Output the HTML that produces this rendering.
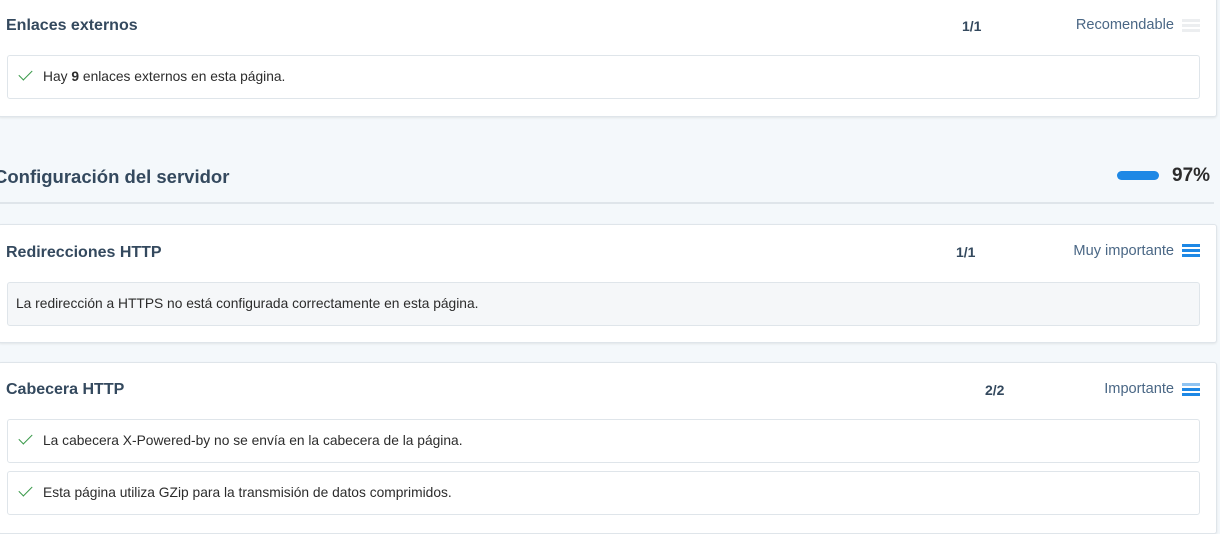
<!DOCTYPE html>
<html><head><style>
body{margin:0;width:1220px;height:523px;overflow:hidden;background:#f4f8fb;font-family:"Liberation Sans",Arial,sans-serif;position:relative}
.card{position:absolute;left:-2px;width:1217px;background:#fff;border:1px solid #dfe5ea;border-radius:3px;box-shadow:0 1px 2px rgba(0,0,0,.08)}
.h{position:absolute;left:7px;font-size:16px;font-weight:bold;color:#34495e}
.sc{position:absolute;font-size:14px;font-weight:bold;color:#34495e}
.lab{position:absolute;right:42px;font-size:14.6px;color:#4a6785}
.ic{position:absolute;right:16px;width:18px}
.ic i{display:block;height:3px;margin-bottom:2px;background:#1e88e5}
.box{position:absolute;left:8px;width:1191px;height:42px;border:1px solid #dfe5ea;border-radius:3px;background:#fff;font-size:13.8px;color:#2c2c2c;line-height:42px}
.box .t{position:absolute;left:35px}
.chk{position:absolute;left:11px;top:14px;width:12px;height:6px;border-left:1.5px solid #3a9a4a;border-bottom:1.5px solid #3a9a4a;transform:rotate(-45deg)}
</style></head><body>
<div class="card" style="top:-5px;height:120px">
 <div class="h" style="top:21px">Enlaces externos</div>
 <div class="sc" style="left:963px;top:22px">1/1</div>
 <div class="lab" style="top:21px">Recomendable</div>
 <div class="ic" style="top:23px"><i style="background:#eceef0"></i><i style="background:#eceef0"></i><i style="background:#eceef0"></i></div>
 <div class="box" style="top:59px"><span class="chk"></span><span class="t">Hay <b>9</b> enlaces externos en esta página.</span></div>
</div>
<div style="position:absolute;left:-6px;top:166px;font-size:18.5px;font-weight:bold;color:#34495e">Configuración del servidor</div>
<div style="position:absolute;left:1117px;top:171px;width:42px;height:9px;border-radius:5px;background:#1e88e5"></div>
<div style="position:absolute;left:1172px;top:165px;font-size:19px;font-weight:bold;color:#2c2c2c">97%</div>
<div style="position:absolute;left:0;top:202px;width:1214px;height:2px;background:#dfe5ea"></div>
<div class="card" style="top:224px;height:117px">
 <div class="h" style="top:19px">Redirecciones HTTP</div>
 <div class="sc" style="left:957px;top:19px">1/1</div>
 <div class="lab" style="top:18px">Muy importante</div>
 <div class="ic" style="top:19px"><i></i><i></i><i></i></div>
 <div class="box" style="top:57px;background:#f5f7f9"><span class="t" style="left:8px">La redirección a HTTPS no está configurada correctamente en esta página.</span></div>
</div>
<div class="card" style="top:362px;height:170px">
 <div class="h" style="top:18px">Cabecera HTTP</div>
 <div class="sc" style="left:986px;top:19px">2/2</div>
 <div class="lab" style="top:18px">Importante</div>
 <div class="ic" style="top:20px"><i style="background:#90c4f2"></i><i></i><i></i></div>
 <div class="box" style="top:56px"><span class="chk"></span><span class="t">La cabecera X-Powered-by no se envía en la cabecera de la página.</span></div>
 <div class="box" style="top:108px"><span class="chk"></span><span class="t">Esta página utiliza GZip para la transmisión de datos comprimidos.</span></div>
</div>
</body></html>
